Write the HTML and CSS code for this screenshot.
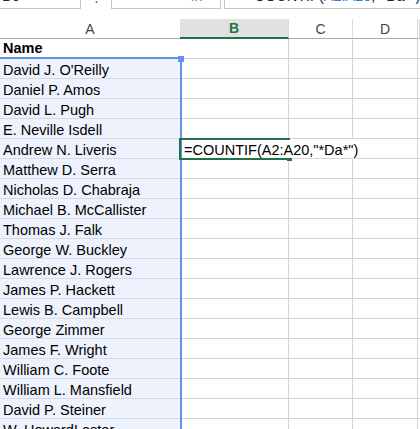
FILE: index.html
```html
<!DOCTYPE html>
<html>
<head>
<meta charset="utf-8">
<link rel="stylesheet" href="styles.css">
</head>
<body>
<div class="fbar">
  <div class="namebox"><span class="ftext">B6</span></div>
  <div class="dots"><span class="ftext">⋮</span></div>
  <div class="fbuttons"><span class="ftext">✕</span><span class="ftext">✓</span><span class="ftext fx">fx</span></div>
  <div class="finput"><span class="ftext">=COUNTIF(<span class="ref">A2:A20</span>,"*Da*")</span></div>
</div>
<div class="sheet">
  <div class="row head">
    <div class="c a h">A</div><div class="c b h sel">B</div><div class="c cc h">C</div><div class="c d h">D</div><div class="c e h"></div>
  </div>
  <div class="row"><div class="c a top bold">Name</div><div class="c b"></div><div class="c cc"></div><div class="c d"></div><div class="c e"></div></div>
  <div class="row"><div class="c a in">David J. O'Reilly</div><div class="c b"></div><div class="c cc"></div><div class="c d"></div><div class="c e"></div></div>
  <div class="row"><div class="c a in">Daniel P. Amos</div><div class="c b"></div><div class="c cc"></div><div class="c d"></div><div class="c e"></div></div>
  <div class="row"><div class="c a in">David L. Pugh</div><div class="c b"></div><div class="c cc"></div><div class="c d"></div><div class="c e"></div></div>
  <div class="row"><div class="c a in">E. Neville Isdell</div><div class="c b"></div><div class="c cc"></div><div class="c d"></div><div class="c e"></div></div>
  <div class="row"><div class="c a in">Andrew N. Liveris</div><div class="c b spill"><span class="formula">=COUNTIF(A2:A20,"*Da*")</span></div><div class="c cc spill"></div><div class="c d"></div><div class="c e"></div></div>
  <div class="row"><div class="c a in">Matthew D. Serra</div><div class="c b"></div><div class="c cc"></div><div class="c d"></div><div class="c e"></div></div>
  <div class="row"><div class="c a in">Nicholas D. Chabraja</div><div class="c b"></div><div class="c cc"></div><div class="c d"></div><div class="c e"></div></div>
  <div class="row"><div class="c a in">Michael B. McCallister</div><div class="c b"></div><div class="c cc"></div><div class="c d"></div><div class="c e"></div></div>
  <div class="row"><div class="c a in">Thomas J. Falk</div><div class="c b"></div><div class="c cc"></div><div class="c d"></div><div class="c e"></div></div>
  <div class="row"><div class="c a in">George W. Buckley</div><div class="c b"></div><div class="c cc"></div><div class="c d"></div><div class="c e"></div></div>
  <div class="row"><div class="c a in">Lawrence J. Rogers</div><div class="c b"></div><div class="c cc"></div><div class="c d"></div><div class="c e"></div></div>
  <div class="row"><div class="c a in">James P. Hackett</div><div class="c b"></div><div class="c cc"></div><div class="c d"></div><div class="c e"></div></div>
  <div class="row"><div class="c a in">Lewis B. Campbell</div><div class="c b"></div><div class="c cc"></div><div class="c d"></div><div class="c e"></div></div>
  <div class="row"><div class="c a in">George Zimmer</div><div class="c b"></div><div class="c cc"></div><div class="c d"></div><div class="c e"></div></div>
  <div class="row"><div class="c a in">James F. Wright</div><div class="c b"></div><div class="c cc"></div><div class="c d"></div><div class="c e"></div></div>
  <div class="row"><div class="c a in">William C. Foote</div><div class="c b"></div><div class="c cc"></div><div class="c d"></div><div class="c e"></div></div>
  <div class="row"><div class="c a in">William L. Mansfield</div><div class="c b"></div><div class="c cc"></div><div class="c d"></div><div class="c e"></div></div>
  <div class="row"><div class="c a in">David P. Steiner</div><div class="c b"></div><div class="c cc"></div><div class="c d"></div><div class="c e"></div></div>
  <div class="row"><div class="c a in">W. HowardLester</div><div class="c b"></div><div class="c cc"></div><div class="c d"></div><div class="c e"></div></div>
  <div class="selection"></div>
  <div class="sel-handle"></div>
  <div class="active"></div>
  <div class="act-handle"></div>
</div>
</body>
</html>
```
FILE: styles.css
```css
html, body {
  margin: 0;
  padding: 0;
  background: #fff;
  overflow: hidden;
}
body {
  width: 420px;
  height: 429px;
  font-family: "Liberation Sans", Arial, sans-serif;
  font-size: 14.5px;
  color: #000;
}
.fbar {
  display: flex;
  height: 9px;
  overflow: hidden;
}
.fbar > div {
  box-sizing: border-box;
  height: 9px;
  position: relative;
  overflow: hidden;
}
.ftext {
  position: relative;
  top: -12px;
  line-height: 16px;
  white-space: nowrap;
  color: #222;
}
.namebox {
  width: 81px;
  border-right: 1px solid #c6c6c6;
  border-bottom: 1px solid #c6c6c6;
  padding-left: 2px;
}
.dots {
  width: 30px;
  text-align: center;
}
.dots .ftext { color: #777; }
.fbuttons {
  width: 110px;
  border-left: 1px solid #c6c6c6;
  border-right: 1px solid #c6c6c6;
  border-bottom: 1px solid #c6c6c6;
  display: flex;
  justify-content: space-between;
  padding: 0 18px 0 10px;
}
.fbuttons .ftext { color: #888; }
.finput {
  margin-left: 3px;
  flex: 1;
  border-left: 1px solid #c6c6c6;
  border-bottom: 1px solid #c6c6c6;
  padding-left: 21px;
}
.ref { color: #3a77d9; }

.sheet {
  position: relative;
  margin-top: 10px;
}
.row {
  display: grid;
  grid-template-columns: 180px 109px 64px 65px 1fr;
  height: 20px;
}
.c {
  box-sizing: border-box;
  height: 20px;
  border-right: 1px solid #d4d4d4;
  border-bottom: 1px solid #d4d4d4;
  padding-left: 3px;
  padding-top: 2px;
  line-height: 19px;
  white-space: nowrap;
}
.head .c {
  border-bottom: 1px solid #ababab;
  border-right: 1px solid #dadada;
  text-align: center;
  color: #444;
  padding: 0;
  font-size: 14px;
  line-height: 20px;
}
.head .a { border-right: none; }
.head .sel {
  background: #e1e1e1;
  color: #217346;
  font-weight: bold;
  border-bottom: 2px solid #217346;
  line-height: 19px;
}
.a.in {
  background: #eef2fc;
  border-bottom-color: #d3d9e6;
  border-right: none;
}
.a.top { border-right: none; padding-top: 0; }
.bold { font-weight: bold; }
.spill { border-right-color: transparent; position: relative; }
.formula {
  position: relative;
  z-index: 3;
  left: 1px;
}
.selection {
  position: absolute;
  left: -2px;
  top: 38px;
  width: 184px;
  height: 500px;
  box-sizing: border-box;
  border: 2px solid #6791e8;
  pointer-events: none;
}
.sel-handle {
  position: absolute;
  left: 178px;
  top: 37px;
  width: 6px;
  height: 6px;
  background: #6791e8;
  z-index: 2;
}
.active {
  position: absolute;
  left: 179px;
  top: 119px;
  width: 111px;
  height: 22px;
  box-sizing: border-box;
  border: 2px solid #217346;
  border-right: none;
  z-index: 1;
}
.act-handle {
  position: absolute;
  left: 287px;
  top: 139px;
  width: 5px;
  height: 3px;
  background: #217346;
  z-index: 2;
}
```
